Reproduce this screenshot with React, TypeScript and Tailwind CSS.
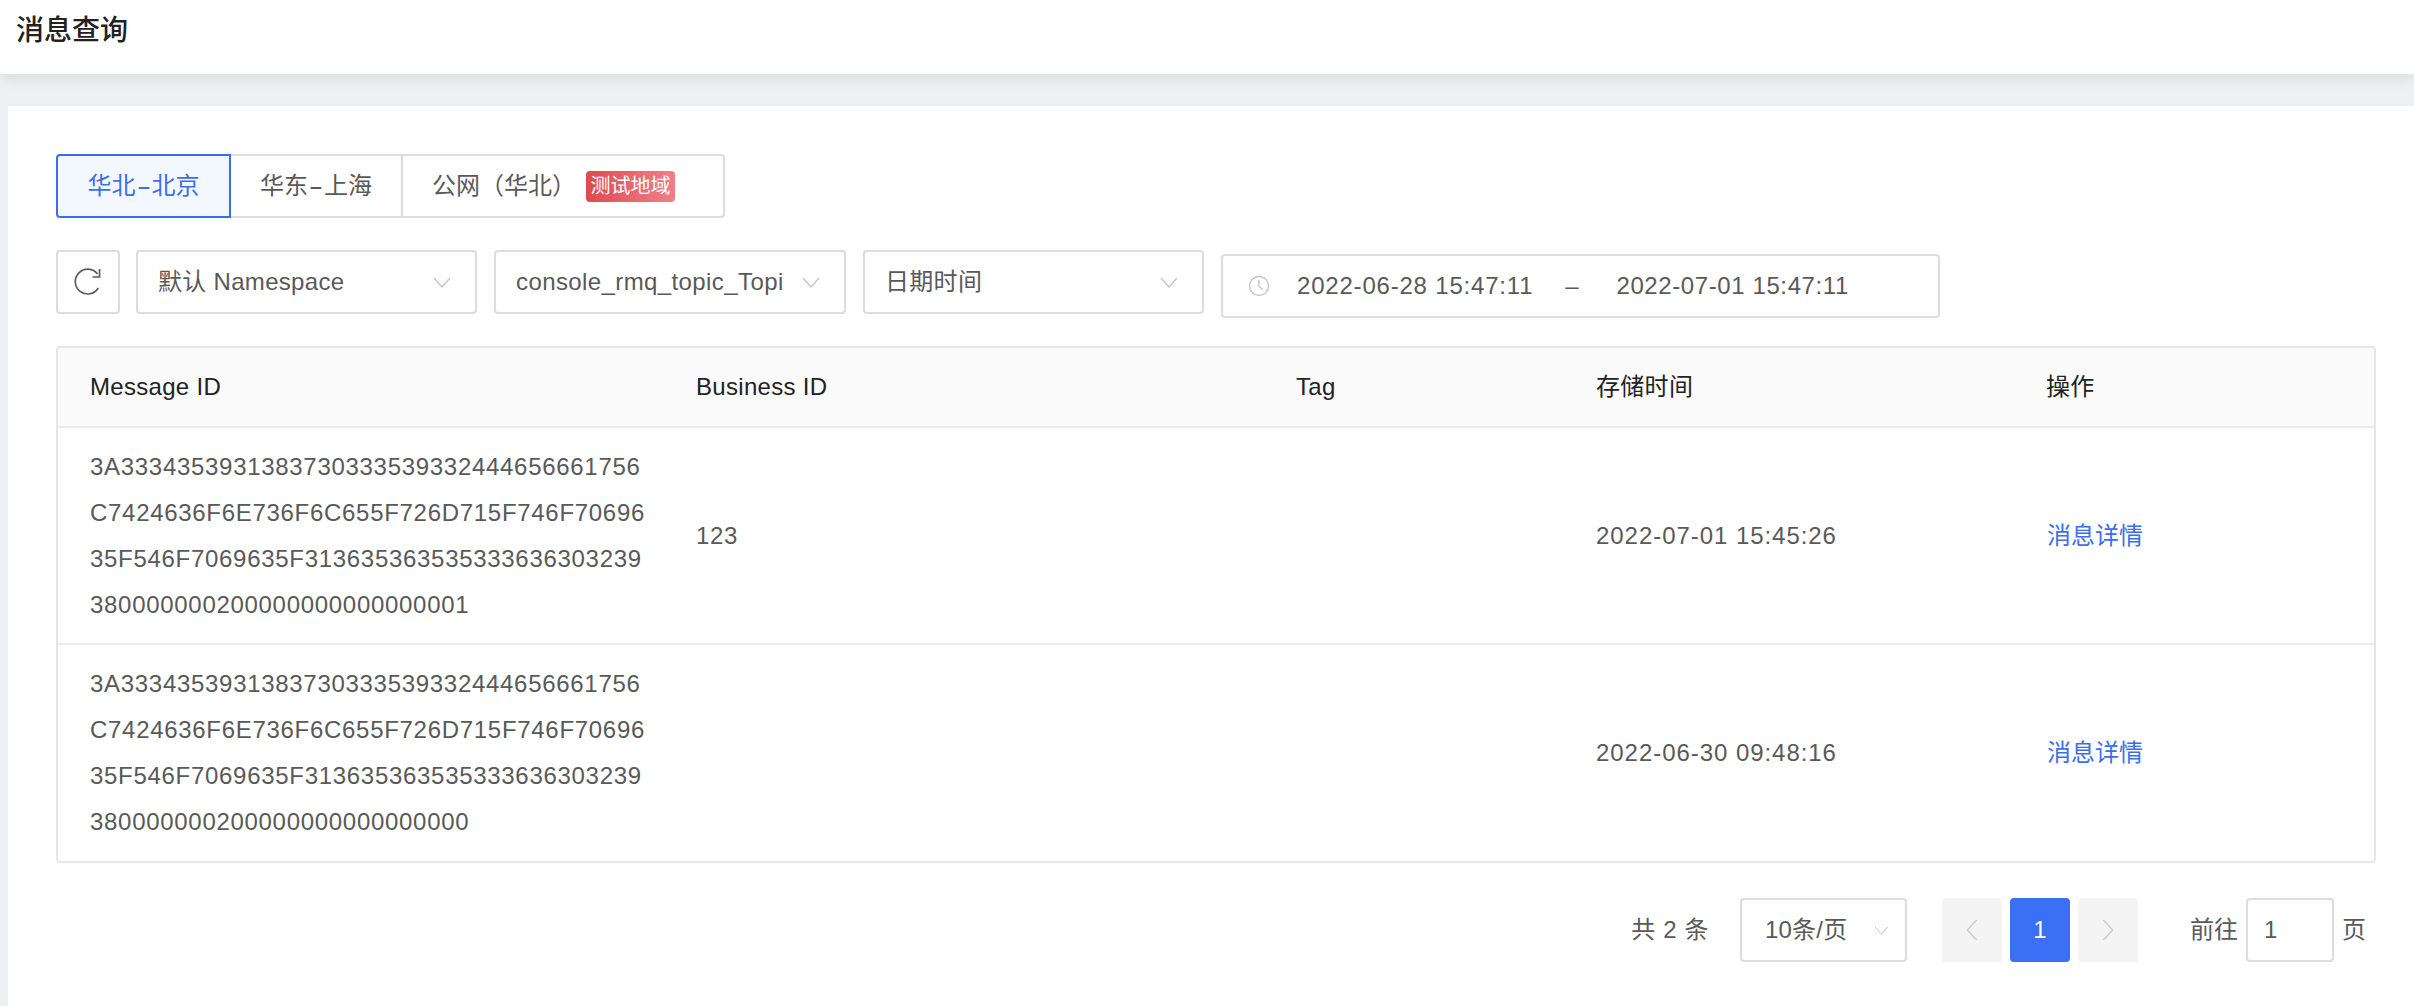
import React from 'react';

const messages = [
  {
    lines: [
      '3A3334353931383730333539332444656661756',
      'C7424636F6E736F6C655F726D715F746F70696',
      '35F546F7069635F313635363535333636303239',
      '380000000200000000000000001',
    ],
    businessId: '123',
    tag: '',
    time: '2022-07-01 15:45:26',
  },
  {
    lines: [
      '3A3334353931383730333539332444656661756',
      'C7424636F6E736F6C655F726D715F746F70696',
      '35F546F7069635F313635363535333636303239',
      '380000000200000000000000000',
    ],
    businessId: '',
    tag: '',
    time: '2022-06-30 09:48:16',
  },
];

const gridCols = 'grid grid-cols-[607px_600px_300px_450px_1fr]';

function Chevron({ small }: { small?: boolean }) {
  return (
    <svg
      width={small ? 15 : 18}
      height={small ? 9 : 11}
      viewBox="0 0 18 11"
      fill="none"
      className="shrink-0"
    >
      <path d="M1 1l8 9 8-9" stroke="#c2c2c2" strokeWidth="1.2" />
    </svg>
  );
}

function SelectBox({ label, width, clip }: { label: string; width: string; clip?: boolean }) {
  return (
    <div className={`${width} h-[64px] flex items-center justify-between pl-[20px] pr-[24px] border-2 border-[#dcdcdc] rounded-[4px] bg-white`}>
      <span className={clip ? 'whitespace-nowrap tracking-[0.4px]' : 'whitespace-nowrap tracking-[0.3px]'}>{label}</span>
      <Chevron />
    </div>
  );
}

export default function App() {
  return (
    <div className="h-[1006px] w-[2414px] flex flex-col bg-[#eef0f4] overflow-hidden text-[24px] text-[#595959] font-['Liberation_Sans','Noto_Sans_CJK_SC',sans-serif]">
      {/* Page title */}
      <header className="h-[74px] shrink-0 bg-white pl-[16px] pt-[12px] shadow-[0_4px_14px_rgba(0,0,0,0.09)] relative">
        <h1 className="text-[28px] leading-[38px] font-medium text-[#222222]">消息查询</h1>
      </header>

      <main className="flex-1 mt-[32px] ml-[8px] bg-white pt-[48px] pl-[48px] pr-[38px]">
        {/* Region tabs */}
        <div className="flex h-[64px] w-[669px]">
          <div className="w-[175px] flex items-center justify-center border-2 border-[#3b6ee8] rounded-l-[4px] bg-[#f3f8ff] text-[#3b6ee8]">
            华北<span className="inline-block mx-[4px] scale-x-[1.8]">-</span>北京
          </div>
          <div className="w-[172px] flex items-center justify-center border-y-2 border-r-2 border-[#dcdcdc]">
            华东<span className="inline-block mx-[4px] scale-x-[1.8]">-</span>上海
          </div>
          <div className="flex-1 flex items-center pl-[29px] border-y-2 border-r-2 border-[#dcdcdc] rounded-r-[4px]">
            <span>公网（华北）</span>
            <span className="ml-[10px] h-[31px] w-[89px] flex items-center justify-center rounded-[4px] bg-gradient-to-r from-[#e0484f] to-[#ee7f8a] text-[20px] text-white">
              测试地域
            </span>
          </div>
        </div>

        {/* Filters */}
        <div className="flex items-start mt-[32px]">
          <button className="w-[64px] h-[64px] flex items-center justify-center border-2 border-[#dcdcdc] rounded-[4px]">
            <svg width="28" height="28" viewBox="0 0 28 28" fill="none" stroke="#5c5c5c" strokeWidth="1.7">
              <path d="M24.3 20A12.4 12.4 0 1 1 23.5 6" />
              <path d="M25.5 1v8h-7" />
            </svg>
          </button>
          <div className="ml-[16px]">
            <SelectBox label="默认 Namespace" width="w-[341px]" />
          </div>
          <div className="ml-[17px]">
            <SelectBox label="console_rmq_topic_Topi" width="w-[352px]" clip />
          </div>
          <div className="ml-[17px]">
            <SelectBox label="日期时间" width="w-[341px]" />
          </div>
          <div className="ml-[17px] mt-[4px] w-[719px] h-[64px] flex items-center pl-[25px] border-2 border-[#dcdcdc] rounded-[4px] tracking-[0.8px]">
            <svg width="22" height="22" viewBox="0 0 22 22" fill="none" stroke="#c4c4c4" strokeWidth="1.3">
              <circle cx="11" cy="11" r="9.5" />
              <path d="M11 5v6.5l3.5 3" />
            </svg>
            <span className="ml-[27px] whitespace-nowrap">2022-06-28 15:47:11</span>
            <span className="ml-[32px]">–</span>
            <span className="ml-[37px] whitespace-nowrap tracking-[0.6px]">2022-07-01 15:47:11</span>
          </div>
        </div>

        {/* Message table */}
        <div className="mt-[28px] border-2 border-[#e6e6e6] rounded-[4px]">
          <div className={`${gridCols} h-[80px] items-center bg-[#fafafa] border-b-2 border-[#ececec] text-[#222222] tracking-[0.3px]`}>
            <div className="pl-[32px]">Message ID</div>
            <div className="pl-[31px]">Business ID</div>
            <div className="pl-[31px]">Tag</div>
            <div className="pl-[31px]">存储时间</div>
            <div className="pl-[31px]">操作</div>
          </div>
          {messages.map((msg, index) => (
            <div
              key={msg.time}
              className={`${gridCols} items-center ${index === 0 ? 'h-[217px] border-b-2 border-[#ececec]' : 'h-[216px]'}`}
            >
              <div className="pl-[32px] leading-[46px] tracking-[0.7px]">
                {msg.lines.map((line) => (
                  <div key={line}>{line}</div>
                ))}
              </div>
              <div className="pl-[31px] tracking-[0.7px]">{msg.businessId}</div>
              <div className="pl-[31px]">{msg.tag}</div>
              <div className="pl-[31px] tracking-[0.95px]">{msg.time}</div>
              <div className="pl-[32px] text-[#3b6ee8]">消息详情</div>
            </div>
          ))}
        </div>

        {/* Pagination */}
        <div className="flex items-center justify-end h-[64px] mt-[35px] pr-[10px]">
          <span className="whitespace-nowrap tracking-[0.6px]">共 2 条</span>
          <div className="ml-[31px] w-[167px] h-[64px] flex items-center justify-between pl-[23px] pr-[16px] border-2 border-[#dcdcdc] rounded-[4px]">
            <span className="tracking-[0.2px]">10条/页</span>
            <Chevron small />
          </div>
          <div className="ml-[35px] w-[60px] h-[64px] flex items-center justify-center rounded-[4px] bg-[#f4f4f4]">
            <svg width="12" height="22" viewBox="0 0 12 22" fill="none" stroke="#cccccc" strokeWidth="1.6">
              <path d="M10.5 1L1.5 11l9 10" />
            </svg>
          </div>
          <div className="ml-[8px] w-[60px] h-[64px] flex items-center justify-center rounded-[4px] bg-[#3b6ff5] text-white">
            1
          </div>
          <div className="ml-[8px] w-[60px] h-[64px] flex items-center justify-center rounded-[4px] bg-[#f4f4f4]">
            <svg width="12" height="22" viewBox="0 0 12 22" fill="none" stroke="#cccccc" strokeWidth="1.6">
              <path d="M1.5 1l9 10-9 10" />
            </svg>
          </div>
          <span className="ml-[52px]">前往</span>
          <div className="ml-[8px] w-[88px] h-[64px] flex items-center pl-[16px] border-2 border-[#dcdcdc] rounded-[4px]">
            1
          </div>
          <span className="ml-[8px]">页</span>
        </div>
      </main>
    </div>
  );
}
